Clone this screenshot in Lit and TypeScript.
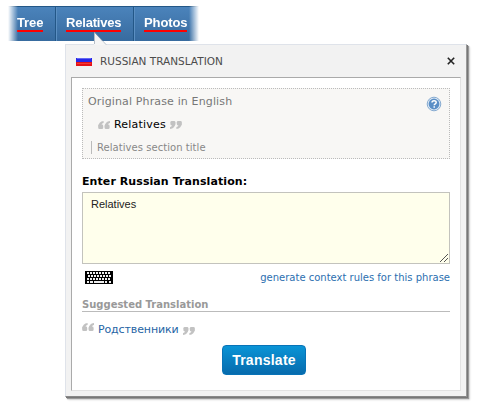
import { LitElement, html, css, svg } from "lit";
import { customElement } from "lit/decorators.js";

const keyRows: number[][] = [
  [2, 5, 8, 11, 14, 17, 20, 23],
  [3, 6, 9, 12, 15, 18, 21, 24],
  [2, 5, 8, 11, 14, 17, 20, 23],
];

// Decorative pair of marks: a rounded block with a curved tail, drawn twice.
const mark = svg`<rect x=".2" y="3.600" width="5" height="4.400" rx="1.300"/><path d="M.2 5.500C.4 2.500 2.300 .2 5.600 0V1.900C4.200 2.200 3.500 3 3.500 4.500Z"/>`;
const marks = (cls: string) => html`<svg class=${cls} width="12" height="8" fill="#c2c2c2"><g>${mark}</g><g transform="translate(6.400 0)">${mark}</g></svg>`;

@customElement("app-root")
export class AppRoot extends LitElement {
  static styles = css`
    :host { display: block; width: 483px; height: 410px; position: relative; overflow: hidden; background: #fff;
      font-family: "DejaVu Sans", sans-serif; font-size: 11px; box-sizing: border-box; padding-top: 6px; }
    * { box-sizing: border-box; }
    .nav { display: flex; width: 192px; height: 35px; margin-left: 8px; border-top: 1px solid #235787;
      background: linear-gradient(#4b83bb, #376b9f);
      -webkit-mask-image: linear-gradient(90deg, transparent, #000 10px, #000 181px, transparent 191px);
      mask-image: linear-gradient(90deg, transparent, #000 10px, #000 181px, transparent 191px); }
    .tab { border-right: 1px solid #235787; box-shadow: inset 1px 0 #5b8fc2; padding: 9px 0 0 9px;
      font: bold 13px/14px "Liberation Sans", sans-serif; color: #fff; height: 34px; }
    .tab:first-child { width: 48px; box-shadow: none; }
    .tab:nth-child(2) { width: 78px; padding-left: 10px; }
    .tab:nth-child(3) { flex: 1; border: 0; padding-left: 10px; }
    .tab span { display: block; width: max-content; border-bottom: 2px solid #f00; height: 16px; }
    .t1 { letter-spacing: -.1px; } .t2 { letter-spacing: -.2px; } .t3 { letter-spacing: -.1px; }
    .pointer { position: absolute; left: 93px; top: 31px; }
    .panel { width: 402px; height: 353px; margin: 3px 0 0 65px; background: #f2f2f2; padding: 0 5px;
      border: 1px solid #dfe3ea; border-right-color: #999; border-bottom-color: #888;
      box-shadow: 1px 1px 0 #777, 2px 2px 1px #999, 3px 3px 2px #ddd; }
    .head { height: 32px; display: flex; align-items: center; padding: 0 6px 1px 5px; color: #4c4c4c; }
    .head .name { margin-left: 8px; flex: 1; font-size: 10.5px; }
    .body { height: 314px; background: #fff; border: 1px solid #aaa; border-right-color: #e2e2e2; border-bottom-color: #e2e2e2;
      padding: 10px 10px 0; }
    .origin { position: relative; width: 368px; height: 71px; border: 1px dotted #bbb; background: #f8f7f5;
      padding: 6px 0 0 5px; color: #777; line-height: 13px; }
    .o { letter-spacing: .14px; }
    .help { position: absolute; right: 7px; top: 7px; }
    .phrase { display: flex; color: #000; margin: 10px 0 0 10px; }
    .p { letter-spacing: .2px; margin: 0 4px; }
    .open { margin-top: 3px; }
    .close { margin-top: 3px; transform: rotate(180deg); }
    .note { border-left: 1px solid #bbb; margin: 10px 0 0 3px; padding-left: 5px; color: #888; font-size: 10px; height: 13px;
      letter-spacing: .05px; }
    .label { font-weight: bold; color: #000; margin-top: 16px; height: 17px; line-height: 13px; letter-spacing: .08px; }
    .field { display: flex; justify-content: space-between; width: 368px; height: 72px; background: #ffffec; border: 1px solid #c3c3bd;
      padding: 5px 1px 1px 8px; font: 11px/13px "Liberation Sans", sans-serif; color: #222; }
    .grip { align-self: flex-end; }
    .tools { display: flex; justify-content: space-between; height: 34px; padding: 7px 0 0 3px; width: 368px; line-height: 13px; }
    .link { color: #2c6fb0; font-size: 10px; white-space: nowrap; }
    .sub { width: 368px; height: 14px; border-bottom: 1px solid #bbb; color: #999; font-weight: bold; font-size: 10px; line-height: 13px; }
    .suggest { display: flex; margin-top: 11px; height: 13px; line-height: 13px; color: #2564a4; }
    .suggest .open { margin-top: 0; }
    .suggest .close { margin-top: 4px; }
    .s { letter-spacing: -.12px; margin: 0 4px; }
    .btn { display: flex; align-items: center; justify-content: center; width: 84px; height: 30px; margin: 9px 0 0 140px;
      border: 1px solid #0873b7; border-radius: 4px; background: linear-gradient(#0a94d6, #076bad); color: #fff;
      font: bold 14px "Liberation Sans", sans-serif; letter-spacing: .25px; }
  `;

  render() {
    return html`
      <div class="nav">
        <div class="tab t1"><span>Tree</span></div>
        <div class="tab t2"><span>Relatives</span></div>
        <div class="tab t3"><span>Photos</span></div>
      </div>
      <svg class="pointer" width="14" height="14"><path d="M1 14V1L13 14Z" fill="#f5f5f5"/><path d="M1.5 13V1L13 13.5" fill="none" stroke="#8a99a8" stroke-width=".6"/></svg>
      <div class="panel">
        <div class="head">
          <svg width="16" height="11"><path fill="#f7f7f7" d="M0 0h16v11H0z"/><path fill="#2727e8" d="M0 3h16v4.500H0z"/><path fill="#6468f2" d="M1 3h14v1H1z"/><path fill="#e41218" d="M0 7h16v4H0z"/><path fill="#f23a34" d="M1 8h14v1H1z"/></svg>
          <span class="name">RUSSIAN TRANSLATION</span>
          <svg width="8" height="8"><path d="M.8 .8l6.400 6.400M7.200 .8L.8 7.200" stroke="#222" stroke-width="1.6"/></svg>
        </div>
        <div class="body">
          <div class="origin">
            <div class="o">Original Phrase in English</div>
            <div class="phrase">${marks("open")}<span class="p">Relatives</span>${marks("close")}</div>
            <div class="note">Relatives section title</div>
            <svg class="help" width="16" height="16"><circle cx="8" cy="8" r="6.800" fill="#dfeaf5" stroke="#7ba3cc" stroke-width=".9"/><circle cx="8" cy="8" r="5.400" fill="#5b8fc6"/><path d="M6 6.600c0-2.600 4.200-2.500 4.200-.2 0 1.500-2 1.300-2 2.800M8.200 10.300v1.500" fill="none" stroke="#fff" stroke-width="1.5"/></svg>
          </div>
          <div class="label">Enter Russian Translation:</div>
          <div class="field"><span>Relatives</span>
            <svg class="grip" width="8" height="8"><path d="M0 8L8 0M4 8L8 4" stroke="#555"/></svg>
          </div>
          <div class="tools">
            <svg width="28" height="13" shape-rendering="crispEdges"><path d="M0 0h28v13H0z" fill="#000"/>
              ${keyRows.map((r, i) => r.map((x) => svg`<rect x=${x} y=${1 + i * 3} width="2" height="2" fill="#eee"/>`))}
              <path d="M2 10h2v2H2zM5 10h3v2H5zM9 10h10v2H9zM20 10h2v2h-2zM24 10h2v2h-2z" fill="#eee"/></svg>
            <span class="link">generate context rules for this phrase</span>
          </div>
          <div class="sub">Suggested Translation</div>
          <div class="suggest">${marks("open")}<span class="s">Родственники</span>${marks("close")}</div>
          <div class="btn">Translate</div>
        </div>
      </div>`;
  }
}
